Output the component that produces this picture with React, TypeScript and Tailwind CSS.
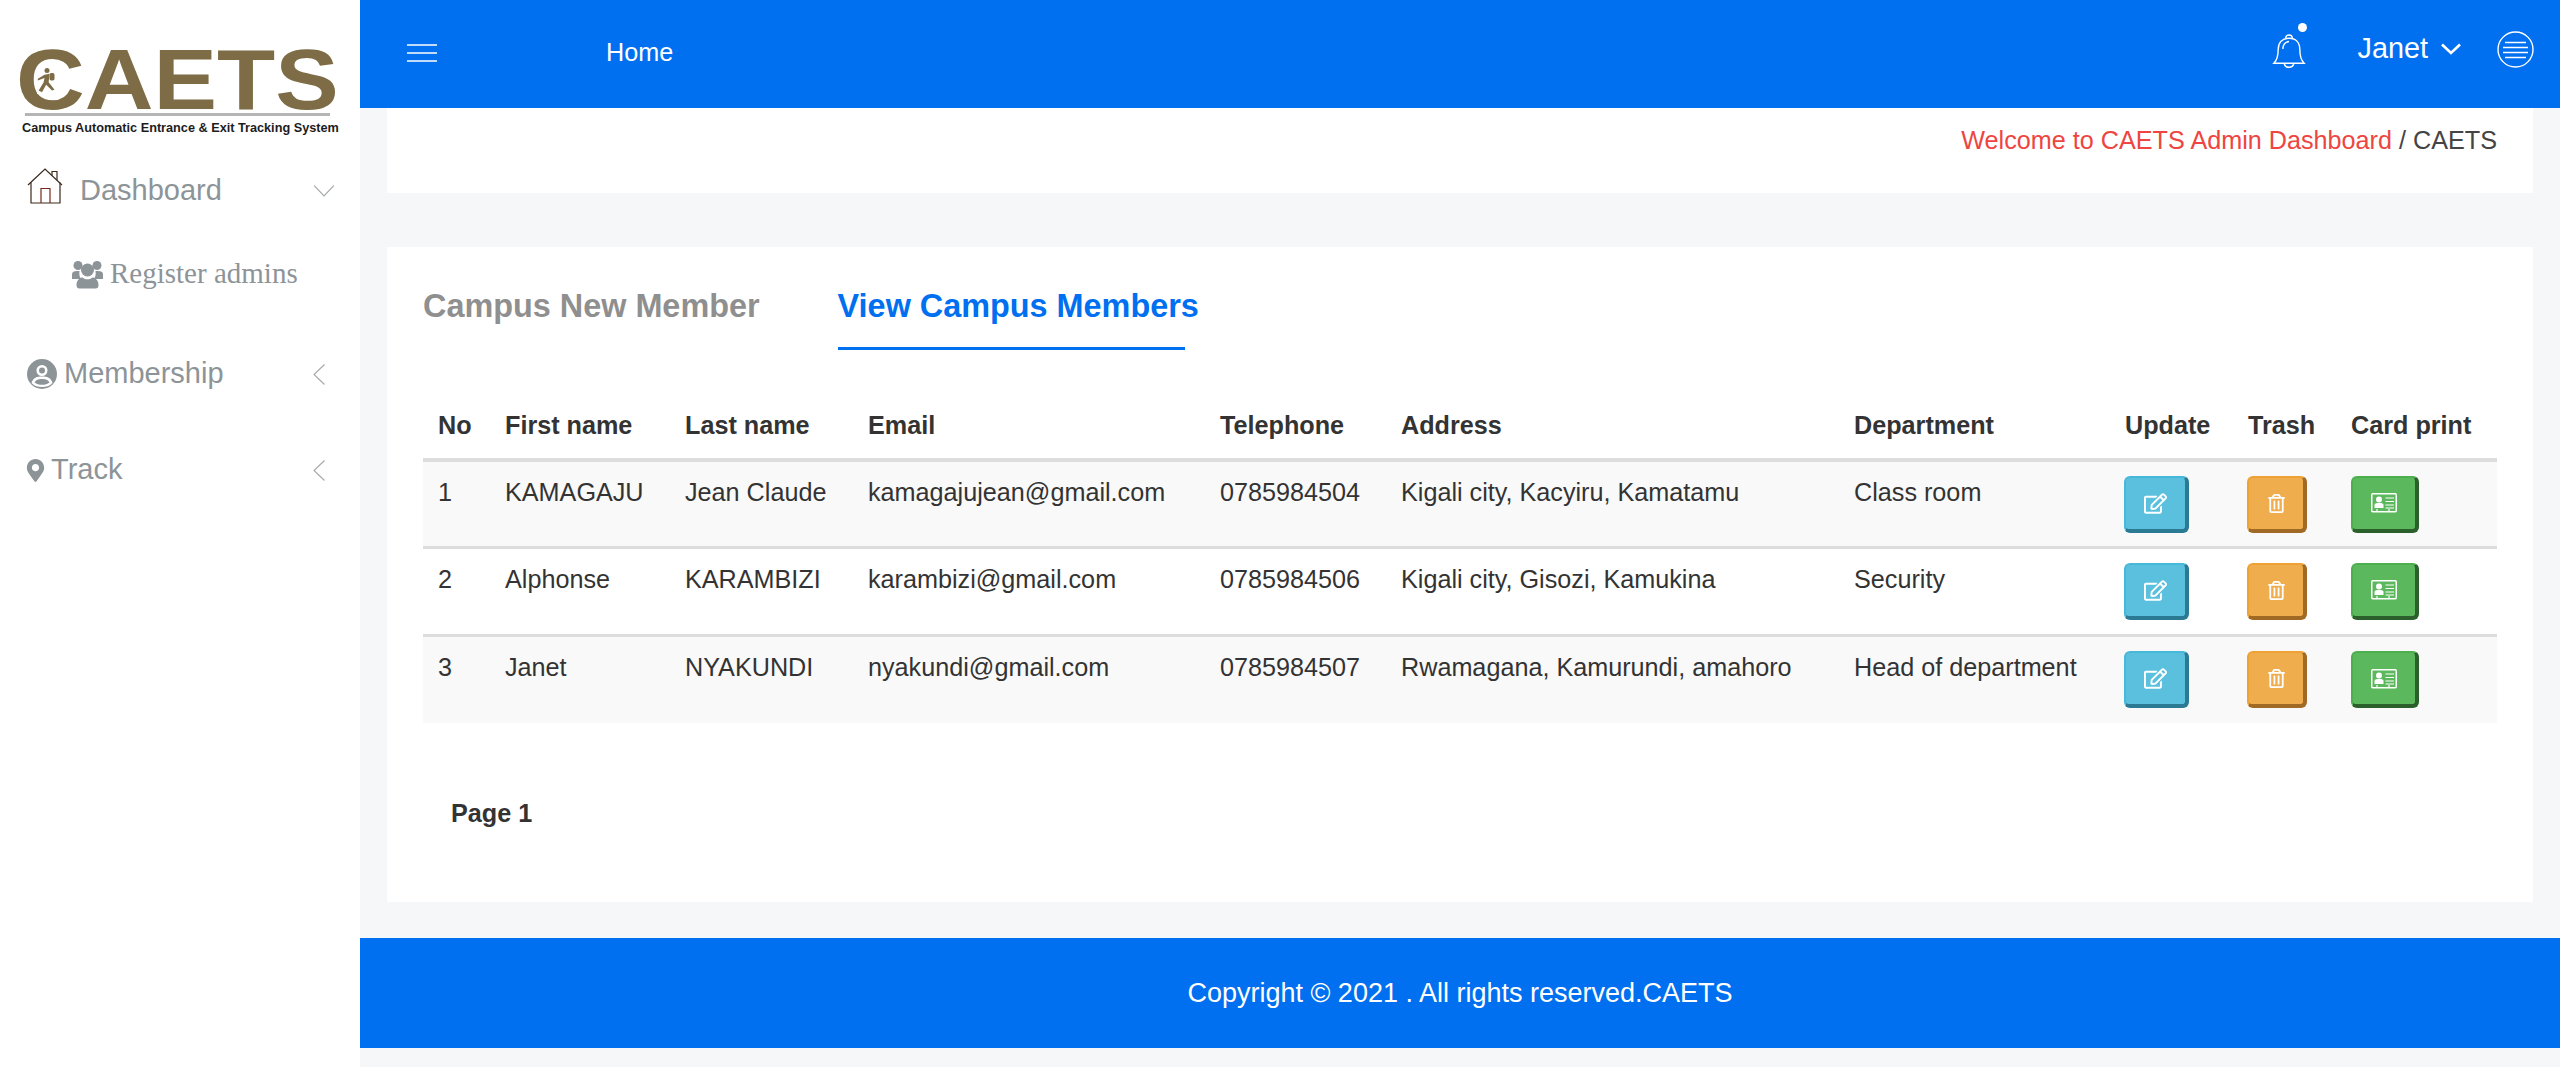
import { FaMapMarkerAlt, FaRegEdit, FaRegTrashAlt } from "react-icons/fa";

const members = [
  {
    no: 1,
    first: "KAMAGAJU",
    last: "Jean Claude",
    email: "kamagajujean@gmail.com",
    phone: "0785984504",
    address: "Kigali city, Kacyiru, Kamatamu",
    department: "Class room",
  },
  {
    no: 2,
    first: "Alphonse",
    last: "KARAMBIZI",
    email: "karambizi@gmail.com",
    phone: "0785984506",
    address: "Kigali city, Gisozi, Kamukina",
    department: "Security",
  },
  {
    no: 3,
    first: "Janet",
    last: "NYAKUNDI",
    email: "nyakundi@gmail.com",
    phone: "0785984507",
    address: "Rwamagana, Kamurundi, amahoro",
    department: "Head of department",
  },
];

const headings = ["No", "First name", "Last name", "Email", "Telephone", "Address", "Department", "Update", "Trash", "Card print"];

function ChevronDown() {
  return (
    <svg width="20" height="12" viewBox="0 0 20 12" fill="none" stroke="#a3a8ab" strokeWidth="1.1">
      <path d="M0 0.5 L10 11 L20 0.5" />
    </svg>
  );
}

function ChevronLeft() {
  return (
    <svg width="12" height="21" viewBox="0 0 12 21" fill="none" stroke="#a3a8ab" strokeWidth="1.1">
      <path d="M11.5 0.5 L1 10.5 L11.5 20.5" />
    </svg>
  );
}

function HomeIcon() {
  return (
    <svg className="-mt-[10px]" width="36" height="36" viewBox="0 0 36 36" fill="none" stroke="#3a2a1c" strokeWidth="1.2">
      <path d="M1 17 L18 1 L35 17" />
      <path d="M25 7.5 V3.5 H30 V12" />
      <path d="M4 14.5 V35 H33 V14.5" />
      <path d="M14 35 V20.5 H23 V35" stroke="#7a2a1c" />
    </svg>
  );
}

function UsersIcon() {
  return (
    <svg width="31" height="29" viewBox="0 0 31 29" fill="#8d9498">
      <circle cx="6" cy="5.5" r="4.5" />
      <circle cx="25" cy="5.5" r="4.5" />
      <path d="M0 19 V14 C0 12 2 11 5 11 H7.5 C7 14 7.5 17 9 19 Z" />
      <path d="M31 19 V14 C31 12 29 11 26 11 H23.5 C24 14 23.5 17 22 19 Z" />
      <circle cx="15.5" cy="10" r="6.5" />
      <path d="M4.5 25 C4.5 20 8 17.5 10.5 17.5 C12 18.8 13.5 19.3 15.5 19.3 C17.5 19.3 19 18.8 20.5 17.5 C23 17.5 26.5 20 26.5 25 C26.5 27.5 25.5 28.5 23.5 28.5 H7.5 C5.5 28.5 4.5 27.5 4.5 25 Z" />
    </svg>
  );
}

function UserCircle() {
  return (
    <svg width="30" height="30" viewBox="0 0 30 30">
      <circle cx="15" cy="15" r="15" fill="#8d9498" />
      <circle cx="15" cy="11.5" r="5.5" fill="#fff" />
      <path d="M4.5 24 C6 18.5 10 17.5 15 17.5 C20 17.5 24 18.5 25.5 24 C22.5 27 19 28 15 28 C11 28 7.5 27 4.5 24 Z" fill="#fff" />
      <circle cx="15" cy="11.5" r="3" fill="#8d9498" />
      <path d="M7.5 23.5 C9 20.5 12 20 15 20 C18 20 21 20.5 22.5 23.5 C20.5 25 18 25.8 15 25.8 C12 25.8 9.5 25 7.5 23.5 Z" fill="#8d9498" />
    </svg>
  );
}

function BellIcon() {
  return (
    <svg width="34" height="38" viewBox="0 0 36 38" fill="none" stroke="#fff" strokeWidth="1.5">
      <path d="M2 32 C6 28 6.5 24 6.5 18 C6.5 10 11 5.5 18 5.5 C25 5.5 29.5 10 29.5 18 C29.5 24 30 28 34 32 Z" />
      <path d="M14.5 5.5 C14.5 1 21.5 1 21.5 5.5" />
      <path d="M13 32.5 C14 37.5 22 37.5 23 32.5" />
      <path d="M11.5 17 C11.5 12.5 14 9.5 18 9" />
    </svg>
  );
}

function MenuCircle() {
  return (
    <svg width="37" height="37" viewBox="0 0 37 37" fill="none" stroke="#fff" strokeWidth="1.4">
      <circle cx="18.5" cy="18.5" r="17.5" />
      <path d="M8 11.5 H29 M6 16.5 H31 M6 21.5 H31 M8 26.5 H29" />
    </svg>
  );
}

function IdCardIcon() {
  return (
    <svg width="26" height="20" viewBox="0 0 26 20" fill="none" stroke="#fff">
      <rect x="0.75" y="0.75" width="24.5" height="18" rx="1" strokeWidth="1.5" />
      <circle cx="8" cy="6.5" r="3" fill="#fff" stroke="none" />
      <path d="M3.5 15 V12 C3.5 10.5 5 10 8 10 C11 10 12.5 10.5 12.5 12 V15 Z" fill="#fff" stroke="none" />
      <path d="M14.5 5 H23 M14.5 8.5 H23 M14.5 12 H23 M14.5 15 H23" strokeWidth="1.2" />
      <path d="M6 16 V19 M18 16 V19" strokeWidth="1.2" />
    </svg>
  );
}

function ActionButton({ color, children }: { color: string; children: React.ReactNode }) {
  return (
    <span className={`flex h-[57px] items-center justify-center rounded-[6px] border-2 border-r-4 border-b-4 text-white ${color}`}>
      {children}
    </span>
  );
}

function CaetsLogo() {
  return (
    <div className="flex h-[165px] flex-col pl-[16px] pt-[46px]">
      <div className="relative h-[66px] w-[322px]">
        <span className="block origin-left scale-x-[1.12] text-[85px] leading-[68px] font-bold text-[#7d6c45]">CAETS</span>
        <svg className="absolute top-[21px] left-[21px] bg-white" width="20" height="27" viewBox="0 0 24 32" fill="#7d6c45">
          <circle cx="12" cy="4" r="3" />
          <rect x="15" y="7" width="6" height="9" rx="2" />
          <path d="M9 9 L15 8 L14 18 L21 27 L18 28 L11 21 L6 30 L2 28 L8 18 L9 13 L1 16 L1 14 Z" />
        </svg>
      </div>
      <div className="ml-[9px] mt-[1px] h-[3px] w-[305px] bg-[#b5b5b5]" />
      <span className="mt-[3px] ml-[6px] text-[12.7px] leading-[18px] font-bold whitespace-nowrap text-[#1c1c1c]">
        Campus Automatic Entrance &amp; Exit Tracking System
      </span>
    </div>
  );
}

function Sidebar() {
  return (
    <aside className="w-[360px] shrink-0 bg-white text-[29px] text-[#8d9498]">
      <CaetsLogo />
      <div className="flex h-[52px] items-center justify-between pr-[26px] pl-[27px]">
        <div className="flex items-center gap-[17px]">
          <HomeIcon />
          <span>Dashboard</span>
        </div>
        <ChevronDown />
      </div>
      <div className="mt-[31px] flex h-[52px] items-center gap-[7px] pl-[72px] font-['Liberation_Serif',serif]">
        <UsersIcon />
        <span>Register admins</span>
      </div>
      <div className="mt-[48px] flex h-[52px] items-center justify-between pr-[35px] pl-[27px]">
        <div className="flex items-center gap-[7px]">
          <UserCircle />
          <span>Membership</span>
        </div>
        <ChevronLeft />
      </div>
      <div className="mt-[44px] flex h-[52px] items-center justify-between pr-[35px] pl-[27px]">
        <div className="flex items-center gap-[4px]">
          <FaMapMarkerAlt size={23} className="-ml-[3px]" />
          <span>Track</span>
        </div>
        <ChevronLeft />
      </div>
    </aside>
  );
}

function Header() {
  return (
    <header className="flex h-[108px] items-center bg-[#006ff0] pb-[2px] text-white">
      <svg className="ml-[47px]" width="30" height="20" viewBox="0 0 30 20" stroke="#fff" strokeWidth="1.5">
        <path d="M0 2 H30 M0 10 H30 M0 18 H30" />
      </svg>
      <span className="ml-[169px] text-[25.2px]">Home</span>
      <div className="relative mr-[52px] -mt-[4px] ml-auto">
        <BellIcon />
        <span className="absolute -top-[9px] right-[-1px] h-[9px] w-[9px] rounded-full bg-white" />
      </div>
      <span className="-mt-[8px] flex items-center gap-[13px] text-[28.8px]">
        Janet
        <svg width="20" height="12" viewBox="0 0 20 12" fill="none" stroke="#fff" strokeWidth="2.6">
          <path d="M1 1.5 L10 10 L19 1.5" />
        </svg>
      </span>
      <span className="mr-[26px] ml-[36px] -mt-[8px]">
        <MenuCircle />
      </span>
    </header>
  );
}

function MembersTable() {
  return (
    <table className="w-[2074px] table-fixed border-collapse text-[25.2px] text-[#333333]">
      <colgroup>
        <col className="w-[67px]" />
        <col className="w-[180px]" />
        <col className="w-[183px]" />
        <col className="w-[352px]" />
        <col className="w-[181px]" />
        <col className="w-[453px]" />
        <col className="w-[271px]" />
        <col className="w-[123px]" />
        <col className="w-[103px]" />
        <col className="w-[161px]" />
      </colgroup>
      <thead>
        <tr className="h-[68px] border-b-4 border-[#dddddd]">
          {headings.map((heading) => (
            <th key={heading} className="pl-[15px] pt-[2px] text-left font-bold whitespace-nowrap">
              {heading}
            </th>
          ))}
        </tr>
      </thead>
      <tbody>
        {members.map((member) => (
          <tr key={member.no} className="h-[87.6px] border-b-[3px] border-[#dddddd] last:border-b-0 odd:bg-[#f9f9f9]">
            <td className="pl-[15px] align-top pt-[12px]">{member.no}</td>
            <td className="pl-[15px] align-top pt-[12px] whitespace-nowrap">{member.first}</td>
            <td className="pl-[15px] align-top pt-[12px] whitespace-nowrap">{member.last}</td>
            <td className="pl-[15px] align-top pt-[12px] whitespace-nowrap">{member.email}</td>
            <td className="pl-[15px] align-top pt-[12px] whitespace-nowrap">{member.phone}</td>
            <td className="pl-[15px] align-top pt-[12px] whitespace-nowrap">{member.address}</td>
            <td className="pl-[15px] align-top pt-[12px] whitespace-nowrap">{member.department}</td>
            <td className="pl-[14px] pr-[44px]">
              <ActionButton color="border-[#46b8da] border-r-[#2b7a94] border-b-[#2b7a94] bg-[#5bc0de]">
                <FaRegEdit size={23} />
              </ActionButton>
            </td>
            <td className="pl-[14px] pr-[29px]">
              <ActionButton color="border-[#eea236] border-r-[#a06a24] border-b-[#a06a24] bg-[#f0ad4e]">
                <FaRegTrashAlt size={19} />
              </ActionButton>
            </td>
            <td className="pl-[15px] pr-[78px]">
              <ActionButton color="border-[#4cae4c] border-r-[#2b5f2b] border-b-[#2b5f2b] bg-[#5cb85c]">
                <IdCardIcon />
              </ActionButton>
            </td>
          </tr>
        ))}
      </tbody>
    </table>
  );
}

export default function App() {
  return (
    <div className="flex min-h-[1067px] bg-[#f6f7f9] font-['Liberation_Sans',sans-serif]">
      <Sidebar />
      <div className="flex min-w-0 flex-1 flex-col">
        <Header />
        <main className="px-[27px]">
          <div className="flex h-[85px] items-start justify-end bg-white pt-[14px] pr-[36px] text-[25.2px] text-[#444444]">
            <span className="text-[#ee4540]">Welcome to CAETS Admin Dashboard</span>
            <span className="ml-[7px]">/ CAETS</span>
          </div>
          <section className="mt-[54px] h-[655px] bg-white px-[36px] pt-[36px]">
            <div className="flex items-start text-[32.4px] font-bold">
              <span className="h-[67px] leading-[46px] text-[#8f8f8f]">Campus New Member</span>
              <span className="ml-[78px] h-[67px] w-[347px] border-b-[3px] border-[#006ff0] leading-[46px] whitespace-nowrap text-[#006ff0]">
                View Campus Members
              </span>
            </div>
            <div className="mt-[42px]">
              <MembersTable />
            </div>
            <div className="mt-[72px] pl-[28px] text-[25.2px] font-bold text-[#333333]">Page 1</div>
          </section>
        </main>
        <footer className="mt-[36px] flex h-[110px] items-center justify-center bg-[#006ff0] text-[27px] text-white">
          Copyright © 2021 . All rights reserved.CAETS
        </footer>
      </div>
    </div>
  );
}
